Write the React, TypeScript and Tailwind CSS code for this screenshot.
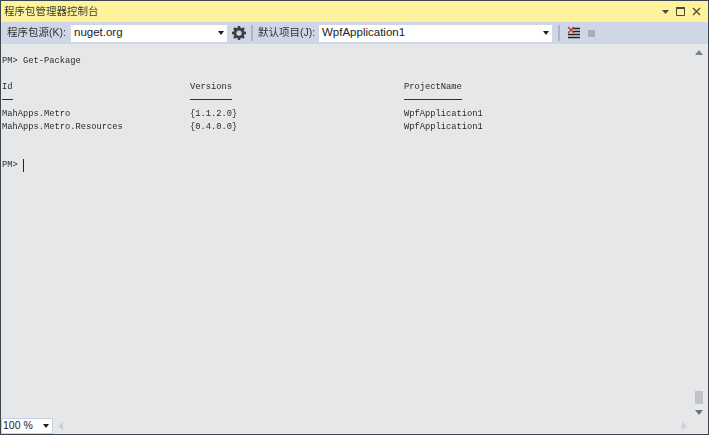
import React from 'react';

const rows = [
  ['MahApps.Metro', '{1.1.2.0}', 'WpfApplication1'],
  ['MahApps.Metro.Resources', '{0.4.0.0}', 'WpfApplication1'],
];

const Caret: React.FC = () => (
  <svg width="6" height="4" viewBox="0 0 6 4" className="shrink-0">
    <path d="M0 0h6L3 4z" fill="#1e1e1e" />
  </svg>
);

const Combo: React.FC<{ text: string; className: string }> = ({ text, className }) => (
  <div className={`h-[17px] bg-white flex items-center justify-between pl-[3px] pr-[3px] text-[11.5px] text-[#222] ${className}`}>
    <span>{text}</span>
    <Caret />
  </div>
);

const Sep: React.FC<{ className?: string }> = ({ className }) => (
  <div className={`w-[2px] h-[16px] bg-[#aeb5c2] ${className ?? ''}`} />
);

const App: React.FC = () => {
  return (
    <div className="w-[709px] h-[435px] flex flex-col overflow-hidden bg-[#e6e7e8] border border-[#3c4650] font-['Liberation_Sans','Noto_Sans_CJK_SC',sans-serif]">
      <header className="h-[21px] shrink-0 bg-[#fff29d] flex items-center justify-between pl-[3px] pr-[7px]">
        <span className="text-[10.5px] text-[#3a3a2a] blur-[0.3px]">程序包管理器控制台</span>
        <div className="flex items-center gap-[7px]">
          <svg width="7" height="4" viewBox="0 0 7 4"><path d="M0 0h7L3.5 4z" fill="#4a4a3a" /></svg>
          <svg width="9" height="9" viewBox="0 0 9 9" fill="none" stroke="#4a4a3a">
            <path d="M.5 1.5h8v7h-8z" />
            <path d="M0 1h9" strokeWidth="2" />
          </svg>
          <svg width="9" height="9" viewBox="0 0 9 9" fill="none" stroke="#4a4a3a" strokeWidth="1.3">
            <path d="M1 1l7 7M8 1L1 8" />
          </svg>
        </div>
      </header>

      <div className="h-[22px] shrink-0 bg-[#cfd6e5] flex items-center pl-[6px] text-[10.5px] text-[#333]">
        <span className="w-[64px] blur-[0.3px]">程序包源(K):</span>
        <Combo text="nuget.org" className="w-[156px]" />
        <svg width="14" height="14" viewBox="0 0 24 24" className="ml-[5px]" fill="#3e3e3e">
          <path
            fillRule="evenodd"
            d="M10 1h4l.6 3.200 2 .8L19.300 3 22 5.800 20.100 8.500l.8 2L24 11v4l-3.100.5-.8 2L22 20.200 19.200 23l-2.700-1.900-2 .8L14 25h-4l-.5-3.100-2-.8L4.800 23 2 20.200l1.900-2.700-.8-2L0 15v-4l3.100-.5.8-2L2 5.800 4.800 3l2.700 2 2-.8zM12 8.500a4.500 4.500 0 1 0 0 9 4.500 4.500 0 0 0 0-9z"
            transform="translate(0 -1)"
          />
        </svg>
        <Sep className="ml-[5px]" />
        <span className="w-[61px] ml-[5px] blur-[0.3px]">默认项目(J):</span>
        <Combo text="WpfApplication1" className="w-[233px]" />
        <Sep className="ml-[6px]" />
        <svg width="13" height="14" viewBox="0 0 13 14" className="ml-[7px]" fill="none">
          <path d="M5 2.500h8M6 5.500h7M1 8.500h12M1 11.500h12" stroke="#222" strokeWidth="1.300" />
          <path d="M1 1l6 6M7 1L1 7" stroke="#c0392b" strokeWidth="1.400" />
        </svg>
        <div className="w-[7px] h-[7px] bg-[#a9adb5] ml-[8px]" />
      </div>

      <div className="flex-1 flex min-h-0">
        <main className="flex-1 min-w-0 pl-[1px] pt-[11px] font-['Liberation_Mono',monospace] text-[8.75px] leading-[13px] text-[#2a2a2a] whitespace-pre blur-[0.3px]">
          <div>PM&gt; Get-Package</div>
          <div className="h-[13px]" />
          <div className="grid grid-cols-[188px_214px_1fr]">
            <div>Id</div>
            <div>Versions</div>
            <div>ProjectName</div>
          </div>
          <div className="grid grid-cols-[188px_214px_1fr] h-[14px] items-start pt-[5px]">
            <div className="w-[11px] h-px bg-[#333]" />
            <div className="w-[42px] h-px bg-[#333]" />
            <div className="w-[58px] h-px bg-[#333]" />
          </div>
          {rows.map((r) => (
            <div key={r[0]} className="grid grid-cols-[188px_214px_1fr]">
              <div>{r[0]}</div>
              <div>{r[1]}</div>
              <div>{r[2]}</div>
            </div>
          ))}
          <div className="h-[25px]" />
          <div className="flex items-center">
            <span>PM&gt; </span>
            <div className="w-px h-[13px] bg-[#222]" />
          </div>
        </main>

        <aside className="w-[15px] shrink-0 flex flex-col items-center justify-between pt-[6px] pb-[3px] mr-[2px]">
          <svg width="8" height="5" viewBox="0 0 8 5"><path d="M0 5h8L4 0z" fill="#7d8188" /></svg>
          <div className="flex flex-col items-center gap-[6px]">
            <div className="w-[8px] h-[13px] bg-[#c2c3c7]" />
            <svg width="8" height="5" viewBox="0 0 8 5"><path d="M0 0h8L4 5z" fill="#6f737a" /></svg>
          </div>
        </aside>
      </div>

      <footer className="h-[16px] shrink-0 flex items-center pr-[4px]">
        <div className="w-[52px] h-[16px] bg-white border border-[#c5d0e4] flex items-center justify-between pl-[1px] pr-[3px] text-[10.5px] text-[#222]">
          <span>100 %</span>
          <Caret />
        </div>
        <svg width="5" height="8" viewBox="0 0 5 8" className="ml-[5px]"><path d="M5 0v8L0 4z" fill="#cfd0d4" /></svg>
        <svg width="5" height="8" viewBox="0 0 5 8" className="ml-auto mr-[17px]"><path d="M0 0v8l5-4z" fill="#cfd0d4" /></svg>
      </footer>
    </div>
  );
};

export default App;
